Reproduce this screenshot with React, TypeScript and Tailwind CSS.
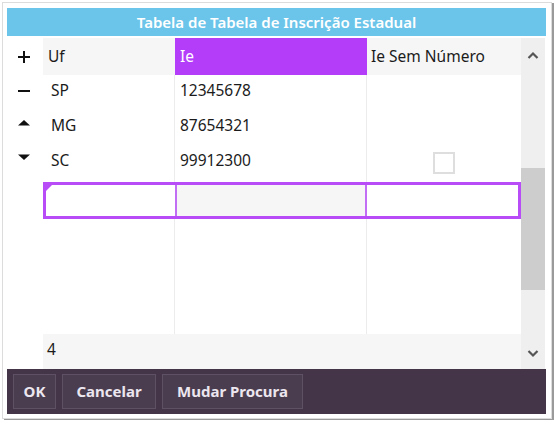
import React from 'react'

type Row = { uf: string, ie: string, semNumero: boolean | null }

const rows: Row[] = [
    { uf: 'SP', ie: '12345678', semNumero: null },
    { uf: 'MG', ie: '87654321', semNumero: null },
    { uf: 'SC', ie: '99912300', semNumero: false },
]

const font = { fontFamily: '"Noto Sans", "Open Sans", sans-serif' }

const ActionIcon = ({ kind }: { kind: 'plus' | 'minus' | 'up' | 'down' }) => (
    <svg width="14" height="14" viewBox="0 0 14 14">
        {kind === 'plus' && <path d="M1 7h12M7 1v12" stroke="#111" strokeWidth="2" />}
        {kind === 'minus' && <path d="M1 7h12" stroke="#111" strokeWidth="2" />}
        {kind === 'up' && <path d="M1 9.5L7 4l6 5.5z" fill="#111" />}
        {kind === 'down' && <path d="M1 4.5L7 10l6-5.5z" fill="#111" />}
    </svg>
)

const Chevron = ({ up }: { up?: boolean }) => (
    <svg width="12" height="8" viewBox="0 0 12 8">
        <path d={up ? 'M1.5 7L6 2.5 10.5 7' : 'M1.5 1L6 5.5 10.5 1'} fill="none" stroke="#555" strokeWidth="2.2" />
    </svg>
)

const App = () => {
    return (
        <div className="w-[555px] h-[424px] bg-white relative overflow-hidden text-[#1b1b1b]" style={font}>
            <div className="ml-[2px] mt-[2px] w-[550px] h-[417px] border border-[#dcdcdc] shadow-[2px_1px_0_#9a9a9a] bg-white px-[4px] pt-[5px]">
                <div className="flex flex-col w-[539px]">
                    <div className="h-[28px] bg-[#6bc4e9] flex items-center justify-center text-white text-[15px] font-semibold">
                        Tabela de Tabela de Inscrição Estadual
                    </div>
                    <div className="flex mt-[2px] h-[331px]">
                        <div className="w-[36px] flex flex-col items-center pr-[2px]">
                            <div className="h-[37px] flex items-center"><ActionIcon kind="plus" /></div>
                            <div className="h-[31px] flex items-center"><ActionIcon kind="minus" /></div>
                            <div className="h-[34px] flex items-center"><ActionIcon kind="up" /></div>
                            <div className="h-[34px] flex items-center"><ActionIcon kind="down" /></div>
                        </div>
                        <div className="w-[478px] flex flex-col">
                            <div className="flex h-[37px] text-[15.5px]">
                                <div className="w-[132px] bg-[#f6f6f6] flex items-center px-[5px]">Uf</div>
                                <div className="w-[192px] bg-[#b43dfa] text-white flex items-center px-[5px]">Ie</div>
                                <div className="w-[154px] bg-[#f6f6f6] flex items-center px-[4px]">Ie Sem Número</div>
                            </div>
                            <div className="flex-1 flex flex-col relative">
                                <div className="absolute inset-0 flex pointer-events-none">
                                    <div className="w-[132px] border-r border-[#ececec]" />
                                    <div className="w-[192px] border-r border-[#ececec]" />
                                </div>
                                {rows.map(r => (
                                    <div key={r.uf} className="flex h-[35px] text-[15.5px] relative">
                                        <div className="w-[132px] flex items-center px-[8px] pb-[4px]">{r.uf}</div>
                                        <div className="w-[192px] flex items-center px-[5px] pb-[4px]">{r.ie}</div>
                                        <div className="w-[154px] flex items-center justify-center">
                                            {r.semNumero !== null && (
                                                <div className="w-[22px] h-[22px] border-2 border-[#dedede] bg-white" />
                                            )}
                                        </div>
                                    </div>
                                ))}
                                <div className="flex h-[37px] mt-[2px] border-[3px] border-[#b84cf7] relative bg-white">
                                    <div className="w-[129px] bg-white relative">
                                        <div className="absolute left-0 top-0 w-0 h-0 border-t-[6px] border-r-[6px] border-t-[#b84cf7] border-r-transparent" />
                                    </div>
                                    <div className="w-[192px] bg-[#f6f6f6] border-l-2 border-r-2 border-[#c16ef5]" />
                                    <div className="flex-1 bg-white" />
                                </div>
                                <div className="flex-1" />
                                <div className="h-[35px] bg-[#f6f6f6] flex items-center px-[4px] pb-[3px] text-[15.5px] relative">4</div>
                            </div>
                        </div>
                        <div className="w-[24px] bg-[#efefef] flex flex-col items-center">
                            <div className="h-[34px] flex items-center"><Chevron up /></div>
                            <div className="h-[96px]" />
                            <div className="w-full h-[122px] bg-[#cdcdcd]" />
                            <div className="flex-1" />
                            <div className="h-[30px] flex items-center"><Chevron /></div>
                        </div>
                    </div>
                    <div className="h-[45px] bg-[#443548] flex items-center gap-[6px] px-[6px] text-[15px] font-bold text-[#ece6ef]">
                        <button className="h-[35px] w-[43px] bg-[#4b3d50] border border-[#5e5163]">OK</button>
                        <button className="h-[35px] w-[94px] bg-[#4b3d50] border border-[#5e5163]">Cancelar</button>
                        <button className="h-[35px] w-[141px] bg-[#4b3d50] border border-[#5e5163]">Mudar Procura</button>
                    </div>
                </div>
            </div>
        </div>
    )
}

export default App
